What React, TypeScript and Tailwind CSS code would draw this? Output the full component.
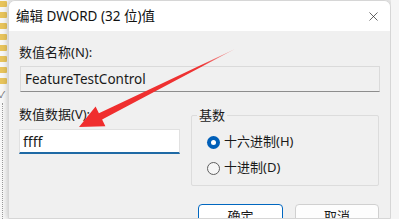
import { X } from 'lucide-react'

const FONT = { fontFamily: '"Segoe UI", "Noto Sans", "Noto Sans CJK SC", sans-serif' }

function FolderStrip() {
  const rows = [0, 1, 2, 3, 4, 5, 6, 7]
  return (
    <div className="w-[8px] shrink-0 flex flex-col bg-[#f7f7f7]">
      <div className="flex flex-col gap-[5px] pt-[1px]">
        {rows.map((r) => (
          <div key={r} className="h-[6px] w-[7px] bg-[#e8c45c] rounded-r-[1px]" />
        ))}
      </div>
      <div className="text-[9px] leading-none text-[#666] mt-[6px] -ml-[1px]">✓</div>
      <div className="flex-1 ml-[2px] mt-[4px] border-l border-dotted border-[#9a9a9a]" />
    </div>
  )
}

function Radio({ checked, label }: { checked?: boolean; label: string }) {
  return (
    <div className="flex items-center gap-[4px] h-[16px]">
      {checked ? (
        <span className="w-[13px] h-[13px] rounded-full bg-[#005fb8] flex items-center justify-center">
          <span className="w-[5px] h-[5px] rounded-full bg-white" />
        </span>
      ) : (
        <span className="w-[13px] h-[13px] rounded-full border border-[#5f5f5f] bg-[#f6f6f6]" />
      )}
      <span className="text-[13px] text-[#1a1a1a]">{label}</span>
    </div>
  )
}

export default function App() {
  return (
    <div className="relative w-[399px] h-[219px] overflow-hidden bg-[#f3f3f3] flex" style={FONT}>
      <FolderStrip />
      <div className="w-[383px] shrink-0 flex flex-col rounded-t-[7px] overflow-hidden shadow-[0_0_6px_rgba(0,0,0,0.25)] border border-[#d6d6d6]">
        <div className="h-[30px] shrink-0 bg-white flex items-center justify-between pl-[7px] pr-[9px]">
          <span className="text-[13.5px] text-[#111]">编辑 DWORD (32 位)值</span>
          <X size={15} strokeWidth={1.1} className="text-[#222]" />
        </div>
        <div className="flex-1 shrink-0 bg-[#f0f0f0] pl-[10px] pr-[10px] pt-[12px]">
          <div className="text-[13px] leading-[18px] text-[#1a1a1a]">数值名称(N):</div>
          <div className="mt-[5px] ml-[1px] h-[26px] border border-[#dadada] border-b-[#8d8d8d] bg-[#f0f0f0] flex items-center pl-[4px] text-[13.5px] text-[#1a1a1a]">
            FeatureTestControl
          </div>
          <div className="mt-[13px] flex">
            <div className="w-[172px] flex flex-col">
              <div className="text-[13px] leading-[18px] text-[#1a1a1a]">数值数据(V):</div>
              <div className="mt-[6px] w-[161px] h-[25px] bg-white border border-[#e1e1e1] border-b-2 border-b-[#1f6aa5] flex items-center pl-[3px] text-[14px] text-[#1a1a1a]">
                ffff
              </div>
            </div>
            <div className="relative mt-[10px] w-[188px] h-[71px] border border-[#dcdcdc] rounded-[2px] flex flex-col pl-[15px] pt-[18px] gap-[10px]">
              <span className="absolute -top-[10px] left-[5px] px-[2px] bg-[#f0f0f0] text-[13px] leading-[18px] text-[#1a1a1a]">基数</span>
              <Radio checked label="十六进制(H)" />
              <Radio label="十进制(D)" />
            </div>
          </div>
          <div className="mt-[18px] flex gap-[12px] pl-[179px]">
            <button className="w-[85px] h-[26px] rounded-[4px] bg-white border border-[#0067c0] text-[13px] text-[#1a1a1a]">确定</button>
            <button className="w-[84px] h-[26px] rounded-[4px] bg-[#fdfdfd] border border-[#d0d0d0] text-[13px] text-[#1a1a1a]">取消</button>
          </div>
        </div>
      </div>
      <div className="flex-1 bg-[#f5f5f5]" />
      <svg className="absolute inset-0 pointer-events-none" width="399" height="219" viewBox="0 0 399 219">
        <defs>
          <linearGradient id="ar" x1="235" y1="49" x2="100" y2="116" gradientUnits="userSpaceOnUse">
            <stop offset="0" stopColor="#f06a6a" stopOpacity="0.5" />
            <stop offset="0.25" stopColor="#ee3333" />
            <stop offset="1" stopColor="#f02d2d" />
          </linearGradient>
        </defs>
        <polygon
          points="235,49 98.9,113.2 95.6,106.4 79,127 105.4,126.2 102.1,119.4"
          fill="url(#ar)"
        />
      </svg>
    </div>
  )
}
